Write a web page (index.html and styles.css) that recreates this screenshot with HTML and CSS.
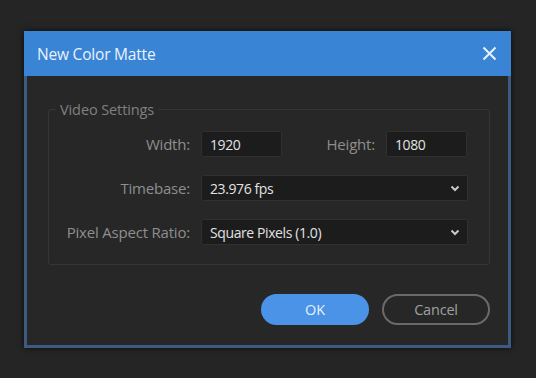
FILE: index.html
```html
<!DOCTYPE html>
<html>
<head>
    <title>New Color Matte</title>
    <link rel="stylesheet" href="styles.css">
</head>
<body>
<div class="dialog">
    <div class="title-bar">
        <span class="title">New Color Matte</span>
        <svg class="close" width="15" height="15" viewBox="0 0 15 15">
            <path d="M1.5 1.5 L13.5 13.5 M13.5 1.5 L1.5 13.5" stroke="#e8f1fb" stroke-width="2" fill="none"/>
        </svg>
    </div>
    <div class="dialog-body">
        <fieldset class="settings">
            <legend>Video Settings</legend>
            <div class="form-grid">
                <label class="field-label">Width:</label>
                <div class="size-row">
                    <div class="text-box small">1920</div>
                    <label class="field-label height-label">Height:</label>
                    <div class="text-box small">1080</div>
                </div>

                <label class="field-label">Timebase:</label>
                <div class="text-box select">
                    <span>23.976 fps</span>
                    <svg class="chevron" width="10" height="7" viewBox="0 0 10 7"><path d="M1.5 1.5 L5 5 L8.5 1.5" stroke="#c8c8c8" stroke-width="2" fill="none"/></svg>
                </div>

                <label class="field-label">Pixel Aspect Ratio:</label>
                <div class="text-box select">
                    <span>Square Pixels (1.0)</span>
                    <svg class="chevron" width="10" height="7" viewBox="0 0 10 7"><path d="M1.5 1.5 L5 5 L8.5 1.5" stroke="#c8c8c8" stroke-width="2" fill="none"/></svg>
                </div>
            </div>
        </fieldset>
        <div class="buttons">
            <div class="btn btn-ok">OK</div>
            <div class="btn btn-cancel">Cancel</div>
        </div>
    </div>
</div>
</body>
</html>
```

FILE: styles.css
```css
body {
    margin: 0;
    background-color: #252525;
    font-family: "Open Sans", "Noto Sans", sans-serif;
    width: 536px;
    height: 378px;
    overflow: hidden;
}

.dialog {
    margin: 31px 0 0 24px;
    width: 487px;
    height: 317px;
    box-sizing: border-box;
    display: flex;
    flex-direction: column;
    box-shadow: 0 0 6px rgba(0, 0, 0, 0.7);
}

.title-bar {
    height: 45px;
    background-color: #3a84d6;
    display: flex;
    align-items: center;
    justify-content: space-between;
    padding: 0 14px 0 13px;
}

.title {
    color: #e9f2fc;
    font-size: 15.5px;
    letter-spacing: -0.2px;
}

.dialog-body {
    flex: 1;
    background-color: #272727;
    border: 3px solid #3d5b80;
    border-top: none;
    padding: 0 18px 0 21px;
    display: flex;
    flex-direction: column;
}

.settings {
    margin: 24px 0 0 0;
    padding: 12px 0 19px 0;
    border: 1px solid #363636;
    border-radius: 3px;
}

.settings legend {
    color: #808080;
    font-size: 14.5px;
    letter-spacing: -0.1px;
    padding: 0 4px;
    margin-left: 7px;
}

.form-grid {
    display: grid;
    grid-template-columns: 141px 267px;
    column-gap: 11px;
    row-gap: 18px;
    align-items: center;
}

.field-label {
    color: #8e8e8e;
    font-size: 15px;
    letter-spacing: -0.2px;
    text-align: right;
}

.size-row {
    display: flex;
    align-items: center;
}

.height-label {
    width: 93px;
    margin-right: 11px;
}

.text-box {
    height: 26px;
    box-sizing: border-box;
    background-color: #1c1c1c;
    border: 1px solid #303030;
    border-radius: 2px;
    color: #e2e2e2;
    font-size: 14px;
    letter-spacing: -0.4px;
    padding: 0 8px;
    display: flex;
    align-items: center;
}

.text-box.small {
    width: 81px;
}

.select {
    justify-content: space-between;
    padding-right: 7px;
}

.buttons {
    display: flex;
    justify-content: flex-end;
    gap: 13px;
    margin-top: 29px;
}

.btn {
    width: 108px;
    height: 31px;
    box-sizing: border-box;
    border-radius: 16px;
    display: flex;
    align-items: center;
    justify-content: center;
    font-size: 14.5px;
    letter-spacing: -0.2px;
}

.btn-ok {
    background-color: #4b93e6;
    color: #e6f0fb;
}

.btn-cancel {
    border: 2px solid #6a6a6a;
    color: #a0a0a0;
}
```
